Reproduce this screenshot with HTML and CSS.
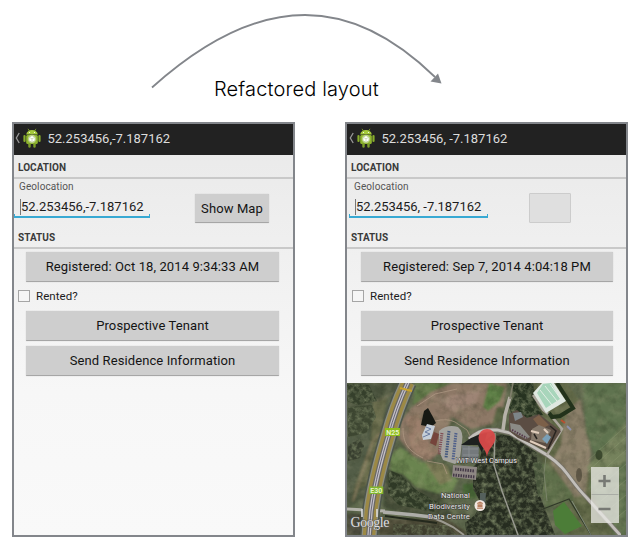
FILE: index.html
```html
<!DOCTYPE html>
<html lang="en">
<head>
<meta charset="utf-8">
<title>Refactored layout</title>
<link rel="stylesheet" href="styles.css">
</head>
<body>
<svg class="defs" width="0" height="0" aria-hidden="true">
  <defs>
    <symbol id="droid" viewBox="0 0 18 20">
      <path d="M5 .8 6.400 3M13 .8 11.600 3" stroke="#86a82c" stroke-width=".8"/>
      <path d="M3.200 6.500C3.600 3.500 6 2 9 2s5.400 1.500 5.800 4.500z" fill="#a4c93a"/>
      <rect x="3.200" y="7" width="11.600" height="9" rx="1.500" fill="#8fb52e"/>
      <rect x=".4" y="7" width="2.200" height="7" rx="1.100" fill="#88ad2c"/>
      <rect x="15.400" y="7" width="2.200" height="7" rx="1.100" fill="#88ad2c"/>
      <rect x="5.300" y="15" width="2.400" height="4.800" rx="1.200" fill="#7c9e28"/>
      <rect x="10.300" y="15" width="2.400" height="4.800" rx="1.200" fill="#7c9e28"/>
      <circle cx="6.500" cy="4.500" r=".6" fill="#fff"/><circle cx="11.500" cy="4.500" r=".6" fill="#fff"/>
      <circle cx="9" cy="11" r="4.200" fill="#b9cf86"/>
      <path d="m9 8 2.700 1.400v3.200L9 14l-2.700-1.400V9.400z" fill="#fff"/>
      <path d="M6.300 9.400 9 10.800l2.700-1.400M9 10.800V14" stroke="#a9bd80" stroke-width=".5" fill="none"/>
    </symbol>
  </defs>
</svg>
<header class="banner">
  <svg class="arrow" width="642" height="110" viewBox="0 0 642 110">
    <path d="M152 87.500C205 40 257 15 305 15c50 0 93 26 130 62" fill="none" stroke="#83868b" stroke-width="1.800"/>
    <path d="M441.500 83.500 438 73.500l-7.500 8z" fill="#83868b"/>
  </svg>
  <h1 class="title">Refactored layout</h1>
</header>
<main class="phones">
  <section class="phone">
    <div class="bar">
      <svg class="back" width="5" height="12" viewBox="0 0 5 12"><path d="M4.200 1 1.300 6 4.200 11" fill="none" stroke="#999" stroke-width="1.300"/></svg>
      <svg class="droid" width="18" height="20"><use href="#droid"/></svg>
      <span class="bar-title">52.253456,-7.187162</span>
    </div>
    <h2 class="section">LOCATION</h2>
    <div class="location">
      <div class="field">
        <label class="label">Geolocation</label>
        <div class="input"><span class="value">52.253456,-7.187162</span></div>
      </div>
      <button class="btn btn-map">Show Map</button>
    </div>
    <h2 class="section status">STATUS</h2>
    <div class="actions">
      <button class="btn reg">Registered: Oct 18, 2014 9:34:33 AM</button>
      <div class="check"><span class="box"></span><span class="rented">Rented?</span></div>
      <button class="btn tenant">Prospective Tenant</button>
      <button class="btn send">Send Residence Information</button>
    </div>
  </section>
  <section class="phone second">
    <div class="bar">
      <svg class="back" width="5" height="12" viewBox="0 0 5 12"><path d="M4.200 1 1.300 6 4.200 11" fill="none" stroke="#999" stroke-width="1.300"/></svg>
      <svg class="droid" width="18" height="20"><use href="#droid"/></svg>
      <span class="bar-title">52.253456, -7.187162</span>
    </div>
    <h2 class="section">LOCATION</h2>
    <div class="location">
      <div class="field">
        <label class="label">Geolocation</label>
        <div class="input"><span class="value">52.253456, -7.187162</span></div>
      </div>
      <button class="btn btn-empty" aria-label="Map"></button>
    </div>
    <h2 class="section status">STATUS</h2>
    <div class="actions">
      <button class="btn reg">Registered: Sep 7, 2014 4:04:18 PM</button>
      <div class="check"><span class="box"></span><span class="rented">Rented?</span></div>
      <button class="btn tenant">Prospective Tenant</button>
      <button class="btn send">Send Residence Information</button>
    </div>
    <svg class="map" width="279" height="152" viewBox="0 0 279 152">
      <defs>
        <filter id="ground" x="0" y="0" width="100%" height="100%" color-interpolation-filters="sRGB">
          <feTurbulence type="fractalNoise" baseFrequency=".1" numOctaves="4" seed="4"/>
          <feColorMatrix values="0 0 0 0 .12  0 0 0 0 .15  0 0 0 0 .08  2 0 0 0 -.85"/>
        </filter>
        <filter id="light" x="0" y="0" width="100%" height="100%" color-interpolation-filters="sRGB">
          <feTurbulence type="fractalNoise" baseFrequency=".09" numOctaves="4" seed="11"/>
          <feColorMatrix values="0 0 0 0 .72  0 0 0 0 .7  0 0 0 0 .56  1.600 0 0 0 -.7"/>
        </filter>
        <filter id="trees" x="0" y="0" width="100%" height="100%" color-interpolation-filters="sRGB">
          <feTurbulence type="fractalNoise" baseFrequency=".2" numOctaves="4" seed="7" result="n"/>
          <feColorMatrix in="n" values="0 0 0 0 .44  0 0 0 0 .48  0 0 0 0 .36  2.200 0 0 0 -.85" result="c"/>
          <feComposite in="c" in2="SourceAlpha" operator="in" result="d"/>
          <feMerge result="m"><feMergeNode in="SourceGraphic"/><feMergeNode in="d"/></feMerge>
          <feGaussianBlur in="m" stdDeviation=".5"/>
        </filter>
        <filter id="soft"><feGaussianBlur stdDeviation="1.300"/></filter>
        <filter id="detail" x="0" y="0" width="100%" height="100%" color-interpolation-filters="sRGB"><feGaussianBlur stdDeviation=".35"/></filter>
      </defs>
      <rect width="279" height="152" fill="#5e684d"/>
      <g filter="url(#soft)">
        <path d="M0 0h58L41 50 24 110 0 126z" fill="#4d573f"/>
        <path d="M0 35 30 18 46 12 30 62 14 104 0 112z" fill="#535d46"/>
        <path d="m26 18 14-4-6 34-14 54-14 6 18-48z" fill="#6a6d4d"/>
        <path d="M33 50 25 60 6 118" stroke="#82795c" stroke-width="2.500" fill="none"/>
        <path d="M0 12 30 18 52 8" stroke="#696b52" stroke-width="2" fill="none"/>
        <path d="M0 131h20v21H0z" fill="#4a4a3a"/>
        <path d="M68 0h34L82 14 66 22z" fill="#627a48"/>
        <path d="M64 25 84 9 106 0 160 0 156 26 150 40 124 46 105 34 100 48 96 64 84 78 66 73 52 56 54 38z" fill="#8d7866"/>
        <path d="M88 16 134 6 128 22 106 29z" fill="#9d8474"/>
        <path d="m60 36 12-6 4 25 16 15-14 8-14-12z" fill="#9c7f6c"/>
        <path d="m142 0 16 4-5 14-12 10-5-4z" fill="#5c7e45"/>
        <path d="m150 24 8 0-1 12-12 6z" fill="#5d6846"/>
        <path d="m43 72 10-8 22 15 24 7 12 11-6 12-28 2-20-10-13-12z" fill="#6a8450"/>
        <path d="m78 79 22 3 5 15-12 5z" fill="#81805a"/>
        <path d="m116 101 14-1 0 16-14 0z" fill="#496837"/>
        <path d="m40 86 16 5 13 13 28 8-5 8 14 10-2 6-48-5-20-7z" fill="#444d38"/>
        <path d="M32 136h68l24 16H32z" fill="#4d4c39"/>
        <path d="M176 0h44l14 20-20 26 3 22 20 14 12 22 30 48h-62l-22-78-20-40z" fill="#616847"/>
        <path d="m216 44 6-18 12-10 4 26 6 28-6 42-10 2-24-34 10-18z" fill="#8c806a"/>
        <path d="m236 0 43 0v152h-12l-25-48 7-30-10-24-2-26z" fill="#5f7350"/>
        <path d="M279 38 240 84l8 20 31-26z" fill="#74825c"/>
        <path d="m186 84 14-4 24 28 3 10-28 7z" fill="#5e704c"/>
      </g>
      <rect width="279" height="152" filter="url(#ground)" opacity=".3"/>
      <rect width="279" height="152" filter="url(#light)" opacity=".3"/>
      <g filter="url(#trees)">
        <path d="M162 0 186 0 190 22 196 32 184 34 174 38 165 32 162 24 168 12z" fill="#263220"/>
        <path d="M126 84 132 78 138 58 148 50 168 54 190 70 191 108 208 152H120l-2-12 10-8 6-12-8-14z" fill="#262c20"/>
        <path d="m42 87 12 5 14 14 24 14-5 9-36-7-10-12z" fill="#2f3926"/>
        <path d="M0 0 22 2 30 18 10 22 0 18z" fill="#353f2b"/>
        <path d="m1 62 12-6 4 7-4 12-12 3z" fill="#383f2f"/>
        <path d="m1 24 24-2 4 12-10 16-18 4z" fill="#3d4631"/>
        <path d="M46 141 100 142 110 152H46z" fill="#3d3d2d"/>
        <path d="m186 80 8-2 4 14-3 20-4 2z" fill="#46533a"/>
      </g>
      <path d="M206 128 217 119 235 143 218 151 208 142z" fill="#4c7d38"/>
      <path d="m196 126 26-10 22 36" fill="none" stroke="#303828" stroke-width="1.200"/>
      <path d="m225 118 19 34" fill="none" stroke="#8a9586" stroke-width=".8"/>
      <g stroke="#9aa67c" stroke-width=".7" opacity=".4"><path d="m240 78 39-35M241 88l38-34M244 98l35-31M248 108l31-27M254 118l25-21M260 128l19-16M266 138l13-11"/></g>
      <g filter="url(#detail)">
      <path d="M70 23 88 11 110 6M56 45c0 14 4 22 20 30M88 38q12-3 20 1l12 8 3 6M80 78l16 3 4 10" fill="none" stroke="#b39c87" stroke-width=".9" opacity=".75"/>
      <g fill="none">
        <path d="M0 126 38 128" stroke="#b3b2aa" stroke-width="3"/>
        <path d="M36 129 68 132 84 134" stroke="#aeada8" stroke-width="3.500"/>
        <path d="M84 134 96 139 106 144 117 152" stroke="#9c9a90" stroke-width="2"/>
        <path d="M38 133 68 137 90 140" stroke="#24291d" stroke-width="2"/>
        <path d="M22 153 24 128C28 98 35 74 41 54Q49 24 61-1" stroke="#4e564c" stroke-width="18"/>
        <path d="M22 153 24 128C28 98 35 74 41 54Q49 24 61-1" stroke="#8d8f83" stroke-width="15"/>
        <path d="M22 153 24 128C28 98 35 74 41 54Q49 24 61-1" stroke="#9c8945" stroke-width="12.500"/>
        <path d="M22 153 24 128C28 98 35 74 41 54Q49 24 61-1" stroke="#6a6965" stroke-width="6"/>
        <path d="M22 153 24 128C28 98 35 74 41 54Q49 24 61-1" stroke="#c4c0c6" stroke-width="3.400"/>
        <path d="M22 153 24 128C28 98 35 74 41 54Q49 24 61-1" stroke="#5f5d6a" stroke-width=".9"/>
        <path d="M15 126v8M30 126v8" stroke="#ddd" stroke-width="1.600"/>
        <path d="m53 5 12 3" stroke="#c8a22b" stroke-width="2"/>
        <path d="M122 56Q132 47 142 47L150 47 163 50 200 72C222 87 221 96 240 115L274 153" stroke="#77736a" stroke-width="4.400"/>
        <path d="M122 56Q132 47 142 47L150 47 163 50 200 72C222 87 221 96 240 115L274 153" stroke="#c2bfba" stroke-width="2.800"/>
        <path d="M200 72 215 46 205 34 196 27 186 12" stroke="#aba69c" stroke-width="2.500"/>
        <path d="M163 14 158 32 156 47" stroke="#b6b2a9" stroke-width="3.500"/><path d="m166 0-3 16" stroke="#807f6c" stroke-width="1.500"/>
        <path d="M148 50 147 82 155 108 171 152" stroke="#98998f" stroke-width="1.500"/>
        <path d="M199 74 197 90 200 118" stroke="#7b846a" stroke-width="1"/>
      </g>
      <path d="m77 28 4-3 5 9 3 6-5 4-10-2z" fill="#171914"/>
      <path d="m80 41 8 2-4 13-8 1-1-5z" fill="#c5ced8"/>
      <path d="m79 44 5 2-6 3 5 2-7 3" stroke="#6a7ba0" fill="none"/><path d="m87 49 5 2-3 12-6-3z" fill="#75443b"/>
      <path d="M92 48q8-7 19-4 6 5 4 15l-2 17-5 5-12-4-4-9z" fill="#a5a49f"/>
      <g fill="none" stroke-width="3"><path d="m95 50-3 22" stroke="#7f4c52" stroke-dasharray="1.200 1"/><path d="m102 48-3 27" stroke="#42577e" stroke-dasharray="1.500 1"/><path d="m109 50-3 27" stroke="#4f5f8a" stroke-dasharray="1.500 1"/></g>
      <path d="m106 82 24 2-1 13-24-3z" fill="#8f8884"/>
      <path d="m108 86 20 2M106 92l22 2" stroke="#453a48" stroke-width="3" stroke-dasharray="1.500 1"/>
      <path d="m114 62 10-7 10-4 6-1-5 20-4-8z" fill="#1d201f"/><path d="m115 62 17 2-1 16-17-2z" fill="#74797c"/>
      <path d="M116 66h15M116 72h16M122 63v14" stroke="#8d9295" stroke-width=".8"/>
      <path d="m133 110 6 0-1 14-5-4z" fill="#55605c"/>
      <path d="m162 31 8-4 10 8 12-4 18 14 4 3-13 20-30-13-9-7z" fill="#5b4d43"/>
      <path d="m163 40 10 2 10 12-4 2-15-8z" fill="#8b8b86"/>
      <path d="m165 47 15 8" stroke="#56394a" stroke-width="2" stroke-dasharray="1.500 1.200"/>
      <path d="m186 36 6-4 10 10-8 4z" fill="#7c6049"/>
      <path d="m185 46 7-4 12 5-6 13-14-3z" fill="#85796b"/>
      <path d="m184 48 8 2M197 46l4 4M183 58l16 7" stroke="#e0cdbb" stroke-width="2.200"/>
      <path d="m195 56 5-5 4 3-4 7z" fill="#7a9fb6"/><path d="m187 51 3 5M203 43l6 5-8 18" stroke="#292521" stroke-width="1.500" fill="none"/>
      <path d="m166 30 8-1 2 5-8 4z" fill="#7d8588"/>
      <path d="m202 30 3 4 8-1 13-8-16-25" stroke="#22321b" stroke-width="4" fill="none"/>
      <path d="m186 10 9-10h12l12 18-20 12z" fill="#dfe8e1"/><path d="m190 10 6-9 8-1 9 16-14 9z" fill="#a8d5bb"/>
      <path d="m193 7 12 15M198 3l12 15M203 1l10 14" stroke="#e4eee5" stroke-width="1"/>
      <path d="m214 37 4 3" stroke="#b75031" stroke-width="2"/><path d="m220 43 4 4" stroke="#8d91ad" stroke-width="2"/>
      <ellipse cx="252" cy="72" rx="3.500" ry="5" fill="#303c24" opacity=".8"/><ellipse cx="232" cy="92" rx="3" ry="7" fill="#4c4638" opacity=".7"/>
      </g>

      <path d="M140 74C139 65 131.500 62 131.500 54.500a8.500 8.500 0 0 1 17 0C148.500 62 141 65 140 74z" fill="#dc4a4a" opacity=".93"/>
      <rect x="38" y="45" width="15" height="8" fill="#8dbd1c"/><rect x="22.300" y="103.500" width="14" height="7.500" fill="#7fb52d"/>
      <g class="road-text"><text x="39.200" y="51.600">N25</text><text x="23.300" y="109.600">E30</text></g>
      <g class="place">
        <text x="109" y="80" textLength="61">WIT West Campus</text>
        <text x="94" y="115" textLength="29">National</text>
        <text x="82" y="125.500" textLength="41">Biodiversity</text>
        <text x="81" y="136" textLength="42">Data Centre</text>
      </g>
      <circle cx="133" cy="122.500" r="5.500" fill="#f2e8e2"/><path d="m130 120 3-1.500 3 1.500v.8h-6zM130.500 121.300h5v3h-5zM130 124.700h6v1h-6z" fill="#b77d5e"/>
      <text class="google" x="3.500" y="143.500" textLength="39">Google</text>
      <g>
        <rect x="244" y="84" width="28" height="56" fill="#e9e9e3" opacity=".76"/>
        <path d="M244.500 111.500h27" stroke="#a9aca5" stroke-width="1"/>
        <path d="M251.500 98h12M257.500 92v12M251.500 126h12" stroke="#777974" stroke-width="2.600"/>
      </g>
    </svg>
  </section>
</main>
</body>
</html>
```

FILE: styles.css
```css
* { box-sizing: border-box; }
body {
  margin: 0;
  width: 642px;
  height: 547px;
  overflow: hidden;
  background: #fff;
  font-family: Roboto, "Liberation Sans", sans-serif;
  color: #1c1c1c;
}
.defs { position: absolute; }
.banner { position: relative; height: 122px; padding: 76px 0 0 214px; }
.arrow { position: absolute; left: 0; top: 0; }
.title {
  margin: 0;
  font: 300 20px/26px Inter, "Liberation Sans", sans-serif;
  letter-spacing: .15px;
  color: #000;
  white-space: nowrap;
}
.phones { display: flex; gap: 50px; padding-left: 12px; }
.phone {
  display: flex;
  flex-direction: column;
  width: 283px;
  height: 415px;
  border: 2px solid #83868b;
  background: linear-gradient(#e9e9e9, #f7f7f7 65%, #f9f9f9);
}
.bar {
  display: flex;
  flex: none;
  align-items: center;
  height: 31px;
  padding: 0 0 3px 1px;
  background: #222;
  color: #ddd;
}
.back { margin-right: 3px; }
.droid { margin-right: 6.5px; }
.bar-title { font-size: 13px; white-space: nowrap; }
.second .bar { padding-left: 2px; }
.section {
  flex: none;
  height: 24px;
  margin: 0;
  padding-left: 4px;
  border-bottom: 2px solid #c9c9c9;
  font-size: 10px;
  font-weight: 700;
  line-height: 25px;
  letter-spacing: .05px;
  color: #3a3a3a;
}
.location { display: flex; flex: none; justify-content: space-between; height: 48px; }
.field { width: 136px; }
.second .field { width: 139px; margin-left: 2px; }
.label { display: block; height: 14px; padding: 2px 0 0 5px; font-size: 10px; line-height: 12px; letter-spacing: .1px; color: #555; }
.input {
  height: 25px;
  padding: 6px 0 0 5px;
  border: solid #38a9d3;
  border-width: 0 1px 2px;
  border-image: linear-gradient(transparent 88%, #38a9d3 88%) 1;
}
.value { display: block; height: 16px; border-left: 1px solid #777; font-size: 13px; line-height: 16px; white-space: nowrap; }
.second .value { letter-spacing: -.03px; }
.second .label { padding-left: 5px; }
.btn {
  display: block;
  flex: none;
  margin: 0;
  padding: 0;
  border: 0;
  border-bottom: 1px solid #a6a6a6;
  border-radius: 1px;
  background: #cecece;
  box-shadow: 0 0 1px #aaa;
  font: 13px/29px Roboto, "Liberation Sans", sans-serif;
  letter-spacing: .1px;
  color: #141414;
}
.btn-map { width: 74px; height: 29px; margin: 15px 24px 0 0; }
.btn-empty { width: 42px; height: 30px; margin: 14px 55px 0 0; border: 1px solid #ccc; background: #dfdfdf; box-shadow: none; }
.status { height: 22px; line-height: 22px; }
.actions { display: flex; flex: none; flex-direction: column; height: 134px; padding: 3px 14px 0 12px; }
.second .actions { padding: 3px 13px 0 14px; }
.actions .btn { height: 30px; }
.check { display: flex; align-items: center; gap: 6px; height: 29px; margin-left: -8px; padding-bottom: 1px; }
.second .check { margin-left: -9px; }
.box { width: 12px; height: 12px; border: 1px solid #a5a5a5; background: #f5f5f5; }
.rented { font-size: 11.5px; letter-spacing: .08px; }
.send { margin-top: 5px; }
.map { display: block; flex: none; }
.road-text { font: 700 7px Roboto, sans-serif; fill: #e8f2c8; }
.place { font: 400 7.800px Roboto, sans-serif; fill: #ecece8; stroke: #333; stroke-width: .8px; paint-order: stroke; }
.google { font: 14px "Liberation Serif", serif; fill: #ddd; stroke: #555; stroke-width: .8px; paint-order: stroke; }
```
